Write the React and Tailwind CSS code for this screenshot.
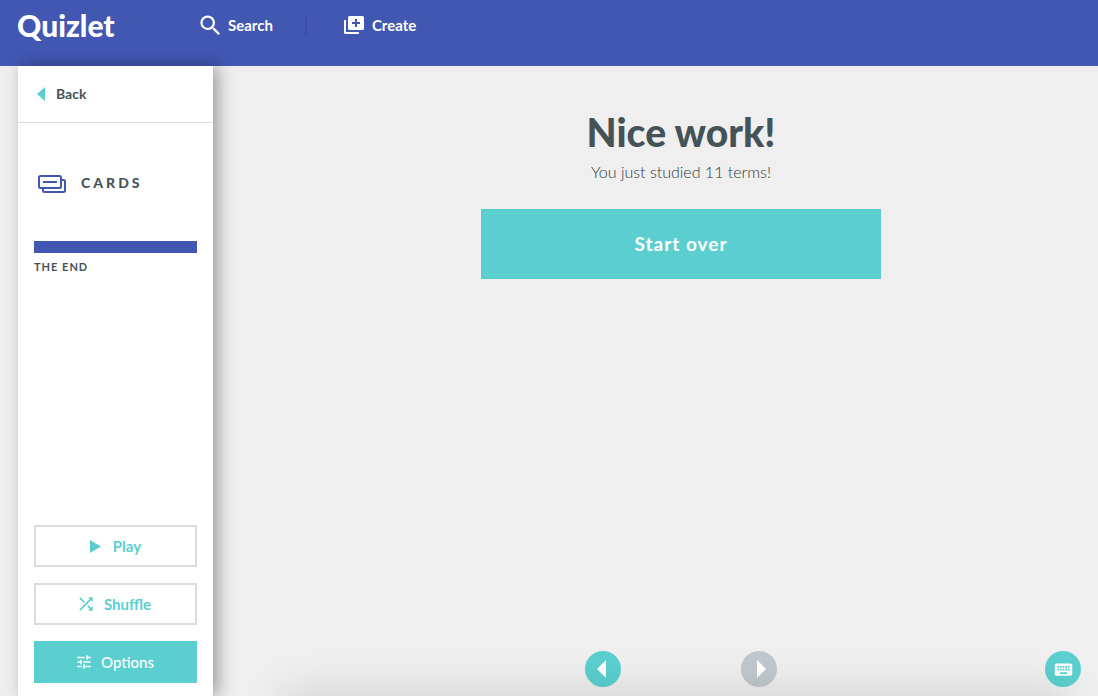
import { MdKeyboard, MdSearch, MdShuffle, MdTune } from "react-icons/md";

function Triangle({ direction = "left", className = "" }) {
  return (
    <svg
      viewBox="0 0 8 16"
      preserveAspectRatio="none"
      fill="currentColor"
      className={className}
      aria-hidden="true"
    >
      <path d={direction === "left" ? "M8 0v16L0 8z" : "M0 0v16l8-8z"} />
    </svg>
  );
}

function CreateIcon() {
  return (
    <svg width="20" height="18" viewBox="0 0 20 18" fill="currentColor" aria-hidden="true">
      <path d="M0 4h2v12h13v2H1.500A1.500 1.500 0 0 1 0 16.500z" />
      <path
        fillRule="evenodd"
        d="M5.500 0h13A1.500 1.500 0 0 1 20 1.500v11a1.500 1.500 0 0 1-1.500 1.500h-13A1.500 1.500 0 0 1 4 12.500v-11A1.500 1.500 0 0 1 5.500 0zM11 3v3H8v2h3v3h2V8h3V6h-3V3z"
      />
    </svg>
  );
}

function CardsIcon() {
  return (
    <svg
      width="28"
      height="18"
      viewBox="0 0 28 18"
      fill="none"
      stroke="currentColor"
      strokeWidth="2"
      strokeLinejoin="round"
      aria-hidden="true"
    >
      <rect x="1" y="1" width="22" height="12" rx="1.5" />
      <path d="M5 7h14" />
      <path d="M23 5h2.5A1.5 1.5 0 0 1 27 6.500V15.500A1.500 1.500 0 0 1 25.500 17H6.500A1.500 1.500 0 0 1 5 15.500V13" />
    </svg>
  );
}

function Header() {
  return (
    <header className="flex h-[66px] items-start bg-[#4257b2] text-white">
      <a
        href="#home"
        className="ml-[17px] flex h-[50px] w-[180px] items-center text-[30px] leading-8 font-black"
      >
        Quizlet
      </a>
      <nav className="flex h-[50px] items-center text-[15px] font-bold">
        <a href="#search" className="flex items-center gap-1">
          <MdSearch size={27} aria-hidden="true" />
          Search
        </a>
        <div className="mr-[37px] ml-8 h-[21px] w-[2px] bg-[#3c4fa2]" />
        <a href="#create" className="flex items-center gap-2">
          <CreateIcon />
          Create
        </a>
      </nav>
    </header>
  );
}

function Sidebar() {
  return (
    <aside className="relative z-10 ml-[18px] flex w-[195px] shrink-0 flex-col bg-white shadow-[5px_0_16px_rgba(0,0,0,0.35)]">
      <a
        href="#back"
        className="flex h-[57px] items-center gap-[11px] border-b border-[#d9dde0] pl-[19px] text-sm font-bold"
      >
        <Triangle className="h-[14px] w-2 text-[#5bcfcf]" />
        Back
      </a>

      <div className="px-4 pt-[50px]">
        <h2 className="flex items-center gap-[15px] pl-1 text-sm leading-5 font-black tracking-[3px]">
          <span className="pt-[2px] text-[#4257b2]">
            <CardsIcon />
          </span>
          CARDS
        </h2>
        <div className="mt-12 h-3 bg-[#4257b2]" />
        <p className="mt-1 text-[11px] leading-5 font-bold tracking-[1px]">THE END</p>
      </div>

      <div className="mt-auto flex flex-col gap-4 px-4 pb-[13px] text-[15px] font-bold text-[#5bcfcf]">
        <button className="flex h-[42px] items-center justify-center gap-3 border-2 border-[#d9dde0]">
          <Triangle direction="right" className="h-[13px] w-[11px]" />
          Play
        </button>
        <button className="flex h-[42px] items-center justify-center gap-2 border-2 border-[#d9dde0] pr-1">
          <MdShuffle size={20} aria-hidden="true" />
          Shuffle
        </button>
        <button className="flex h-[42px] items-center justify-center gap-2 bg-[#5bcfcf] pr-[2px] font-medium text-white">
          <MdTune size={18} aria-hidden="true" />
          Options
        </button>
      </div>
    </aside>
  );
}

function Main() {
  return (
    <main className="relative flex flex-1 flex-col overflow-hidden pl-[51px]">
      <div className="flex flex-col items-center pt-[42px]">
        <h1 className="text-[39px] leading-[48px] font-black">Nice work!</h1>
        <p className="mt-1 text-base leading-6 font-light text-[#2e3a3f]">
          You just studied 11 terms!
        </p>
        <button className="mt-[25px] h-[70px] w-full max-w-[400px] bg-[#5bcfcf] text-[19px] font-bold tracking-[1px] text-white">
          Start over
        </button>
      </div>

      <div className="mt-auto grid grid-cols-[1fr_auto_1fr] pr-[17px] pb-[9px]">
        <div />
        <div className="ml-[17px] flex gap-[120px] text-white">
          <button
            aria-label="Previous"
            className="flex size-9 items-center justify-center rounded-full bg-[#5bcfcf] pr-1"
          >
            <Triangle className="h-[18px] w-[9px]" />
          </button>
          <button
            aria-label="Next"
            className="flex size-9 items-center justify-center rounded-full bg-[#c0c8cd] pl-1"
          >
            <Triangle direction="right" className="h-[18px] w-[9px]" />
          </button>
        </div>
        <button
          aria-label="Keyboard shortcuts"
          className="flex size-9 items-center justify-center justify-self-end rounded-full bg-[#5bcfcf] text-white"
        >
          <MdKeyboard size={21} aria-hidden="true" />
        </button>
      </div>

      {/* soft shadow along the bottom edge */}
      <div className="pointer-events-none absolute top-full right-8 left-[72px] h-10 shadow-[0_0_45px_rgba(0,0,0,0.16)]" />
    </main>
  );
}

export default function App() {
  return (
    <div className="flex min-h-screen flex-col bg-[#efefef] font-[Lato,sans-serif] text-[#455358]">
      <Header />
      <div className="flex flex-1">
        <Sidebar />
        <Main />
      </div>
    </div>
  );
}
